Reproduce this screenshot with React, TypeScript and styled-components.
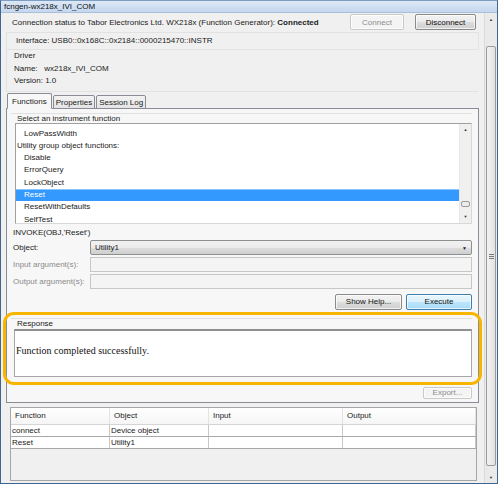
import React from 'react';
import styled, { createGlobalStyle } from 'styled-components';

const GlobalStyle = createGlobalStyle`
  html, body {
    margin: 0;
    padding: 0;
    background: #ffffff;
  }
  body {
    font-family: 'Liberation Sans', Arial, sans-serif;
    font-size: 8px;
    color: #1a1a1a;
  }
`;

const listItems: { label: string; header?: boolean; selected?: boolean }[] = [
  { label: 'LowPassWidth' },
  { label: 'Utility group object functions:', header: true },
  { label: 'Disable' },
  { label: 'ErrorQuery' },
  { label: 'LockObject' },
  { label: 'Reset', selected: true },
  { label: 'ResetWithDefaults' },
  { label: 'SelfTest' },
];

const historyRows = [
  { fn: 'connect', obj: 'Device object', input: '', output: '' },
  { fn: 'Reset', obj: 'Utility1', input: '', output: '' },
];

export default function App() {
  return (
    <>
      <GlobalStyle />
      <Window>
        <TitleBar>fcngen-wx218x_IVI_COM</TitleBar>
        <Body>
          <Content>
            <StatusRow>
              <StatusText>
                Connection status to Tabor Electronics Ltd. WX218x (Function Generator):{' '}
                <b>Connected</b>
              </StatusText>
              <WinButton disabled width={54}>
                Connect
              </WinButton>
              <WinButton width={61}>Disconnect</WinButton>
            </StatusRow>

            <InfoPanel>
              <Line>Interface: USB0::0x168C::0x2184::0000215470::INSTR</Line>
            </InfoPanel>

            <DriverPanel>
              <Line>Driver</Line>
              <Line>Name:&nbsp;&nbsp; wx218x_IVI_COM</Line>
              <Line>Version: 1.0</Line>
            </DriverPanel>

            <TabStrip>
              <Tab active>Functions</Tab>
              <Tab>Properties</Tab>
              <Tab>Session Log</Tab>
            </TabStrip>

            <TabPanel>
              <GroupLabel>Select an instrument function</GroupLabel>
              <ListBox>
                <ListItems>
                  {listItems.map((item) => (
                    <ListItem
                      key={item.label}
                      header={item.header}
                      selected={item.selected}
                    >
                      {item.label}
                    </ListItem>
                  ))}
                </ListItems>
                <SmallScroll>
                  <ScrollArrow>▲</ScrollArrow>
                  <SmallTrack>
                    <SmallThumb />
                  </SmallTrack>
                  <ScrollArrow>▼</ScrollArrow>
                </SmallScroll>
              </ListBox>

              <InvokeText>INVOKE(OBJ,'Reset')</InvokeText>

              <FieldRow>
                <FieldLabel>Object:</FieldLabel>
                <Combo>
                  <span>Utility1</span>
                  <ComboArrow>▼</ComboArrow>
                </Combo>
              </FieldRow>
              <FieldRow>
                <FieldLabel disabled>Input argument(s):</FieldLabel>
                <TextField />
              </FieldRow>
              <FieldRow>
                <FieldLabel disabled>Output argument(s):</FieldLabel>
                <TextField />
              </FieldRow>

              <ActionRow>
                <WinButton width={67}>Show Help...</WinButton>
                <WinButton width={66} primary>
                  Execute
                </WinButton>
              </ActionRow>

              <ResponseGroup>
                <GroupLabel>Response</GroupLabel>
                <ResponseBox>Function completed successfully.</ResponseBox>
              </ResponseGroup>

              <ExportRow>
                <WinButton width={49} height={12} disabled>
                  Export...
                </WinButton>
              </ExportRow>
            </TabPanel>

            <HistoryTable>
              <HeaderRow>
                <Cell width={99}>Function</Cell>
                <Cell width={99}>Object</Cell>
                <Cell width={134}>Input</Cell>
                <Cell>Output</Cell>
              </HeaderRow>
              {historyRows.map((r) => (
                <DataRow key={r.fn}>
                  <Cell width={99}>{r.fn}</Cell>
                  <Cell width={99}>{r.obj}</Cell>
                  <Cell width={134}>{r.input}</Cell>
                  <Cell>{r.output}</Cell>
                </DataRow>
              ))}
              <TableFill />
            </HistoryTable>
          </Content>

          <MainScroll>
            <ScrollArrow>▲</ScrollArrow>
            <MainTrack>
              <MainThumb>
                <Grip />
              </MainThumb>
            </MainTrack>
            <ScrollArrow>▼</ScrollArrow>
          </MainScroll>
        </Body>
      </Window>
    </>
  );
}

const Window = styled.div`
  width: 496px;
  height: 482px;
  border: 1px solid #42658f;
  border-top-color: #7d9cc2;
  background: #f0f0f0;
  display: flex;
  flex-direction: column;
  overflow: hidden;
`;

const TitleBar = styled.div`
  height: 11px;
  line-height: 11px;
  padding-left: 3px;
  background: linear-gradient(#dce8f6, #c4d7ee);
  border-bottom: 1px solid #a9c0dd;
  font-size: 8px;
  color: #111;
`;

const Body = styled.div`
  flex: 1;
  display: flex;
  min-height: 0;
`;

const Content = styled.div`
  flex: 1;
  display: flex;
  flex-direction: column;
  padding: 0 0 0 4px;
  min-width: 0;
`;

const StatusRow = styled.div`
  height: 18px;
  display: flex;
  align-items: center;
  gap: 11px;
  padding: 0 8px 0 7px;
  flex-shrink: 0;
`;

const StatusText = styled.div`
  flex: 1;
  white-space: nowrap;
  b {
    font-weight: bold;
  }
`;

const WinButton = styled.button<{
  width: number;
  height?: number;
  primary?: boolean;
}>`
  width: ${(p) => p.width}px;
  height: ${(p) => p.height ?? 16}px;
  padding: 0;
  font-family: inherit;
  font-size: 8px;
  color: ${(p) => (p.disabled ? '#8d8d8d' : '#111')};
  border: 1px solid
    ${(p) => (p.disabled ? '#c9c9c9' : p.primary ? '#3c7fb1' : '#8a8a8a')};
  border-radius: 2px;
  background: ${(p) =>
    p.disabled
      ? '#f4f4f4'
      : p.primary
        ? 'linear-gradient(#eaf6fd 0%, #d9f0fc 50%, #bee6fd 51%, #a7d9f5 100%)'
        : 'linear-gradient(#f2f2f2 0%, #ebebeb 50%, #dddddd 51%, #cfcfcf 100%)'};
  box-shadow: inset 0 0 0 1px rgba(255, 255, 255, 0.7);
`;

const InfoPanel = styled.div`
  margin: 1px 5px 0 1px;
  height: 16px;
  flex-shrink: 0;
  display: flex;
  align-items: center;
  padding-left: 9px;
  border: 1px solid #e2e2e2;
  border-bottom: none;
`;

const DriverPanel = styled.div`
  margin: 0 5px 0 1px;
  padding: 0 0 3px 7px;
  border: 1px solid #e2e2e2;
  border-right-color: #f0f0f0;
  display: flex;
  flex-direction: column;
  flex-shrink: 0;
`;

const Line = styled.div`
  line-height: 12.5px;
  white-space: nowrap;
`;

const TabStrip = styled.div`
  display: flex;
  margin: 1px 0 -1px 2px;
  height: 16px;
  align-items: flex-end;
  position: relative;
  z-index: 1;
  flex-shrink: 0;
`;

const Tab = styled.div<{ active?: boolean }>`
  height: ${(p) => (p.active ? 16 : 14)}px;
  line-height: ${(p) => (p.active ? 15 : 13)}px;
  padding: 0 ${(p) => (p.active ? 4 : 2)}px;
  margin-right: 1px;
  border: 1px solid #898c95;
  border-bottom: ${(p) => (p.active ? '1px solid #f7f7f7' : '1px solid #898c95')};
  border-radius: 2px 2px 0 0;
  background: ${(p) =>
    p.active ? '#f7f7f7' : 'linear-gradient(#f3f3f3, #e4e4e4)'};
  box-sizing: border-box;
  white-space: nowrap;
`;

const TabPanel = styled.div`
  margin: 0 5px 0 1px;
  height: 295px;
  flex-shrink: 0;
  border: 1px solid #898c95;
  background: #f7f7f7;
  padding: 4px 6px 0 8px;
  display: flex;
  flex-direction: column;
  box-sizing: border-box;
`;

const GroupLabel = styled.div`
  line-height: 9px;
  border-top: 1px solid #e0e0e0;
  margin-left: -4px;
  padding-left: 6px;
`;

const ListBox = styled.div`
  height: 99px;
  display: flex;
  border: 1px solid #a0a0a0;
  border-right-color: #d8d8d8;
  border-bottom-color: #d8d8d8;
  background: #ffffff;
`;

const ListItems = styled.div`
  flex: 1;
  overflow: hidden;
  padding-top: 4px;
`;

const ListItem = styled.div<{ header?: boolean; selected?: boolean }>`
  height: 12.3px;
  line-height: 12.3px;
  padding-left: ${(p) => (p.header ? 1 : 8)}px;
  color: ${(p) => (p.selected ? '#ffffff' : '#1a1a1a')};
  background: ${(p) => (p.selected ? '#3399ff' : 'transparent')};
  box-shadow: ${(p) => (p.selected ? 'inset 0 1px 0 #8cc6ff' : 'none')};
  white-space: nowrap;
`;

const SmallScroll = styled.div`
  width: 11px;
  display: flex;
  flex-direction: column;
  background: #f0f0f0;
  border-left: 1px solid #e8e8e8;
`;

const ScrollArrow = styled.div`
  height: 12px;
  display: flex;
  align-items: center;
  justify-content: center;
  font-size: 4px;
  color: #333;
`;

const SmallTrack = styled.div`
  flex: 1;
  display: flex;
  flex-direction: column;
  justify-content: flex-end;
  padding-bottom: 4px;
`;

const SmallThumb = styled.div`
  height: 4px;
  margin: 0 1px;
  border: 1px solid #9a9a9a;
  border-radius: 2px;
  background: #ececec;
`;

const InvokeText = styled.div`
  margin: 3px 0 0 -2px;
  line-height: 12px;
`;

const FieldRow = styled.div`
  display: flex;
  align-items: center;
  height: 16px;
  margin-top: 1px;
  margin-left: -2px;
  &:first-of-type {
    margin-top: 4px;
  }
`;

const FieldLabel = styled.div<{ disabled?: boolean }>`
  width: 77px;
  color: ${(p) => (p.disabled ? '#8a8a8a' : '#1a1a1a')};
  white-space: nowrap;
`;

const Combo = styled.div`
  flex: 1;
  height: 15px;
  display: flex;
  align-items: center;
  justify-content: space-between;
  padding: 0 4px;
  border: 1px solid #8e8f8f;
  border-radius: 2px;
  background: linear-gradient(#f2f2f2 0%, #ebebeb 50%, #dddddd 51%, #cfcfcf 100%);
  box-sizing: border-box;
`;

const ComboArrow = styled.span`
  font-size: 5px;
  color: #222;
`;

const TextField = styled.div`
  flex: 1;
  height: 15px;
  border: 1px solid #c7c7c7;
  background: #f4f4f4;
  box-sizing: border-box;
`;

const ActionRow = styled.div`
  display: flex;
  justify-content: flex-end;
  gap: 4px;
  margin-top: 4px;
`;

const ResponseGroup = styled.div`
  position: relative;
  margin-top: 8px;
  display: flex;
  flex-direction: column;
  &::after {
    content: '';
    position: absolute;
    left: -12px;
    right: -10px;
    top: -6px;
    bottom: -8px;
    border: 3px solid #f7b500;
    border-radius: 11px;
    pointer-events: none;
  }
`;

const ResponseBox = styled.div`
  height: 48px;
  margin-left: -1px;
  margin-top: 1px;
  background: #ffffff;
  border: 1px solid #a7a7a7;
  border-top: 2px solid #8f8f8f;
  box-sizing: border-box;
  padding: 14px 0 0 1px;
  font-family: 'Liberation Serif', 'Times New Roman', serif;
  font-size: 10px;
  color: #111;
`;

const ExportRow = styled.div`
  display: flex;
  justify-content: flex-end;
  margin-top: 10px;
`;

const HistoryTable = styled.div`
  margin: 4px 7px 2px 5px;
  flex: 1;
  display: flex;
  flex-direction: column;
  border: 1px solid #a6a6a6;
  background: #f0f0f0;
`;

const HeaderRow = styled.div`
  display: flex;
  height: 16px;
  background: linear-gradient(#ffffff, #f5f5f5);
  border-bottom: 1px solid #d5d5d5;
`;

const DataRow = styled.div`
  display: flex;
  height: 11px;
  background: #ffffff;
  border-bottom: 1px solid #a8a8a8;
`;

const Cell = styled.div<{ width?: number }>`
  ${(p) => (p.width ? `width: ${p.width}px;` : 'flex: 1;')}
  box-sizing: border-box;
  display: flex;
  align-items: center;
  padding-left: 1px;
  border-right: 1px solid #c8c8c8;
  white-space: nowrap;
  overflow: hidden;
  ${HeaderRow} & {
    padding-left: 4px;
    border-right-color: #e3e3e3;
  }
`;

const TableFill = styled.div`
  flex: 1;
`;

const MainScroll = styled.div`
  width: 12px;
  display: flex;
  flex-direction: column;
  background: #eaeaea;
  border-left: 1px solid #dadada;
`;

const MainTrack = styled.div`
  flex: 1;
  padding: 21px 0 5px;
  display: flex;
`;

const MainThumb = styled.div`
  flex: 1;
  margin: 0 1px;
  border: 1px solid #9b9b9b;
  border-radius: 2px;
  background: linear-gradient(90deg, #f3f3f3, #e2e2e2);
  display: flex;
  align-items: center;
  justify-content: center;
`;

const Grip = styled.div`
  width: 5px;
  height: 5px;
  background: repeating-linear-gradient(
    #777 0,
    #777 1px,
    transparent 1px,
    transparent 2px
  );
`;
